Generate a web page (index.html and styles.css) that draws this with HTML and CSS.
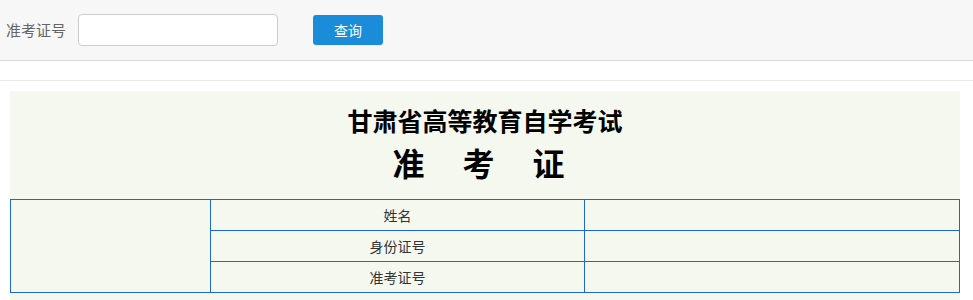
FILE: index.html
```html
<!DOCTYPE html>
<html lang="zh-CN">
<head>
<meta charset="utf-8">
<title>准考证查询</title>
<link rel="stylesheet" href="styles.css">
</head>
<body>
<div class="search-bar">
  <label class="search-label" for="zkz">准考证号</label>
  <input class="search-input" id="zkz" type="text">
  <button class="search-btn" type="button">查询</button>
</div>
<div class="spacer"></div>
<div class="main">
  <div class="card">
    <h1 class="title">甘肃省高等教育自学考试</h1>
    <h2 class="subtitle"><span>准</span><span>考</span><span>证</span></h2>
    <table class="info">
      <tr>
        <td class="photo" rowspan="3"></td>
        <td class="key">姓名</td>
        <td class="val"></td>
      </tr>
      <tr>
        <td class="key">身份证号</td>
        <td class="val"></td>
      </tr>
      <tr>
        <td class="key">准考证号</td>
        <td class="val"></td>
      </tr>
    </table>
  </div>
</div>
</body>
</html>
```

FILE: styles.css
```css
* { box-sizing: border-box; }
html, body {
  margin: 0;
  padding: 0;
  background: #fff;
  font-family: "Microsoft YaHei", "Noto Sans CJK SC", "Noto Sans", sans-serif;
}
.search-bar {
  height: 61px;
  background: #f7f7f7;
  border-bottom: 1px solid #dcdcdc;
  display: flex;
  align-items: center;
  padding-left: 6px;
  padding-bottom: 1px;
}
.search-label {
  font-size: 15px;
  color: #666;
  width: 60px;
  margin-right: 12px;
}
.search-input {
  width: 200px;
  height: 32px;
  border: 1px solid #ccc;
  border-radius: 4px;
  background: #fff;
  margin: 0 35px 0 0;
  outline: none;
}
.search-btn {
  width: 70px;
  height: 30px;
  border: none;
  border-radius: 3px;
  background: #1a8cd9;
  color: #fff;
  font-family: inherit;
  font-size: 14px;
  padding: 0;
  margin-top: 1px;
}
.spacer {
  height: 19px;
}
.main {
  border-top: 1px solid #e8e8e8;
  box-shadow: 0 1px 1px rgba(0,0,0,0.03);
  padding: 10px 13px 0 10px;
}
.card {
  background: #f5f8ef;
  padding-top: 13px;
  padding-bottom: 20px;
}
.title {
  margin: 0;
  text-align: center;
  font-size: 25px;
  line-height: 32px;
  font-weight: bold;
  color: #000;
}
.subtitle {
  margin: 6px 0 0 0;
  display: flex;
  justify-content: center;
  gap: 38px;
  font-size: 32px;
  line-height: 40px;
  font-weight: bold;
  color: #000;
  padding-right: 13px;
}
.info {
  margin-top: 17px;
  width: 100%;
  border-collapse: collapse;
  table-layout: fixed;
}
.info td {
  border: 1px solid #1f68d4;
  height: 31px;
  padding: 0;
  font-size: 14px;
  color: #333;
  text-align: center;
}
.info .photo { width: 200px; }
.info .key { width: 374px; }
```
